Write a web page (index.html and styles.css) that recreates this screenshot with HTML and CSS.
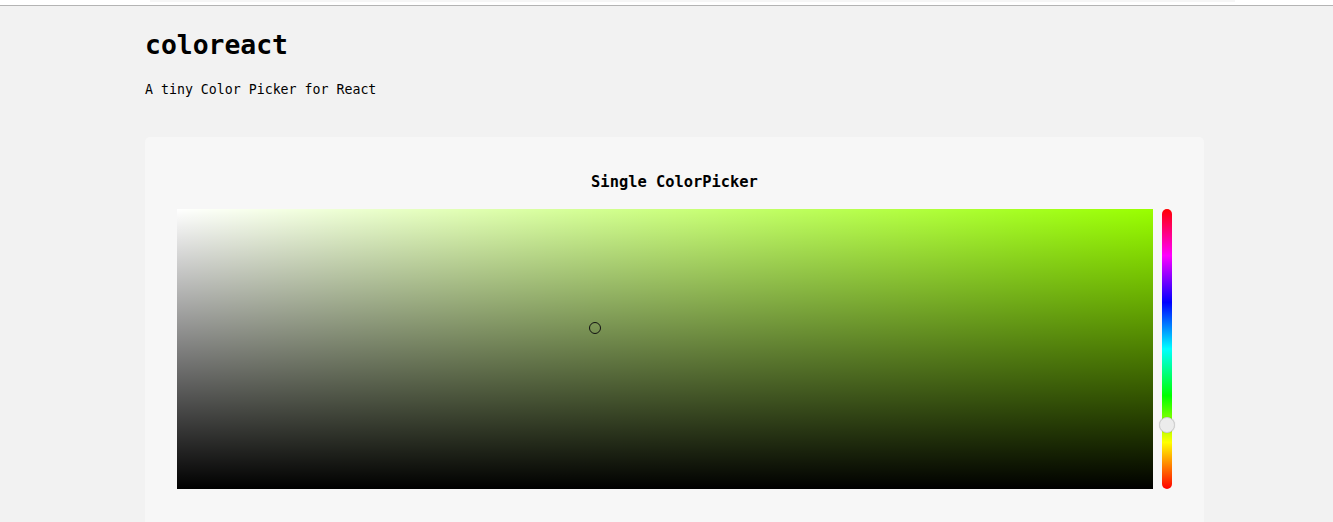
FILE: index.html
```html
<!DOCTYPE html>
<html lang="en">
<head>
<meta charset="utf-8">
<title>coloreact</title>
<link rel="stylesheet" href="styles.css">
</head>
<body>
<div class="topbar"><div class="topbar-inner"></div></div>
<main class="page">
  <h1 class="title">coloreact</h1>
  <p class="subtitle">A tiny Color Picker for React</p>
  <section class="card">
    <h2 class="card-title">Single ColorPicker</h2>
    <div class="picker">
      <div class="sv-area">
        <div class="sv-cursor" style="left:42.8%;top:42.5%"></div>
      </div>
      <div class="hue-bar">
        <div class="hue-thumb" style="top:77.2%"></div>
      </div>
    </div>
  </section>
</main>
</body>
</html>
```
FILE: styles.css
```css
* { box-sizing: border-box; }
html, body { margin: 0; padding: 0; }
body {
  background: #f2f2f2;
  font-family: "DejaVu Sans Mono", "Liberation Mono", monospace;
  color: #000;
  overflow: hidden;
}
.topbar {
  height: 6px;
  background: #fff;
  border-bottom: 1px solid #b4b4b4;
  display: flex;
  justify-content: center;
}
.topbar-inner {
  width: 1085px;
  height: 2px;
  margin-left: 52px;
  background: #f6f6f6;
}
.page {
  margin-left: 145px;
  width: 1059px;
}
.title {
  margin: 23px 0 0;
  font-size: 26.4px;
  line-height: 32px;
  font-weight: bold;
}
.subtitle {
  margin: 19px 0 0;
  font-size: 13.25px;
  line-height: 20px;
}
.card {
  margin-top: 37px;
  background: #f7f7f7;
  border-radius: 5px;
  padding: 35px 32px 40px;
}
.card-title {
  margin: 0 0 17px;
  text-align: center;
  font-size: 15.4px;
  line-height: 20px;
  font-weight: bold;
}
.picker {
  display: flex;
  gap: 9px;
  height: 280px;
}
.sv-area {
  flex: 1;
  position: relative;
  background-color: hsl(84, 100%, 50%);
  background-image:
    linear-gradient(to top, #000, rgba(0,0,0,0)),
    linear-gradient(to right, #fff, rgba(255,255,255,0));
}
.sv-cursor {
  position: absolute;
  width: 12px;
  height: 12px;
  margin: -6px 0 0 -6px;
  border: 1px solid #111;
  border-radius: 50%;
}
.hue-bar {
  width: 10px;
  position: relative;
  border-radius: 5px;
  background: linear-gradient(to bottom,
    #ff0000 0%, #ff00ff 16.67%, #0000ff 33.33%, #00ffff 50%,
    #00ff00 66.67%, #ffff00 83.33%, #ff0000 100%);
}
.hue-thumb {
  position: absolute;
  left: 50%;
  width: 16px;
  height: 16px;
  margin: -8px 0 0 -8px;
  border-radius: 50%;
  background: #ececec;
  border: 1px solid #cfcfcf;
  box-shadow: 0 0 1px rgba(0,0,0,0.2);
}
```
